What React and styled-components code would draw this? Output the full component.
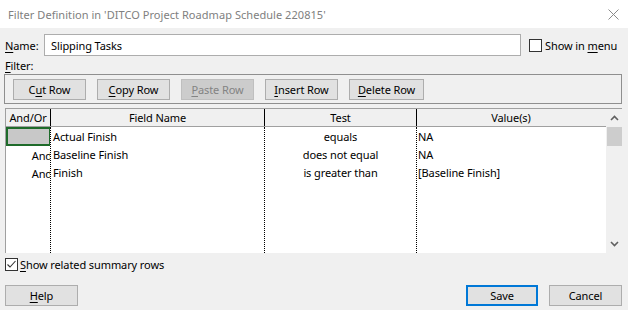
import React from "react";
import styled, { createGlobalStyle } from "styled-components";

const GlobalStyle = createGlobalStyle`
  html, body {
    margin: 0;
    padding: 0;
    background: #f0f0f0;
  }
  body {
    font-family: "Noto Sans", "Open Sans", sans-serif;
    font-size: 11px;
    color: #000;
  }
`;

const Dialog = styled.div`
  width: 628px;
  height: 310px;
  background: #f0f0f0;
  display: flex;
  flex-direction: column;
  overflow: hidden;
`;

const TitleBar = styled.div`
  height: 28px;
  background: #fff;
  display: flex;
  align-items: center;
  justify-content: space-between;
  padding: 0 9px 0 8px;
  color: #808080;
  font-size: 11px;
  letter-spacing: 0.05px;
`;

const Body = styled.div`
  display: flex;
  flex-direction: column;
  padding: 0 6px 0 5px;
`;

const NameRow = styled.div`
  display: flex;
  align-items: center;
  height: 22px;
  margin-top: 6px;
`;

const Label = styled.span`
  width: ${(p) => p.width || "auto"};
  letter-spacing: -0.1px;
  white-space: nowrap;
  u {
    text-decoration: underline;
    text-underline-offset: 2px;
  }
`;

const NameInput = styled.div`
  width: 469px;
  height: 20px;
  border: 1px solid #adadad;
  background: #fff;
  display: flex;
  align-items: center;
  padding-left: 6px;
  letter-spacing: -0.1px;
`;

const Check = styled.span`
  width: 11px;
  height: 11px;
  border: 1px solid #333;
  background: ${(p) => p.bg || "#fff"};
  display: inline-flex;
  align-items: center;
  justify-content: center;
  margin-right: ${(p) => p.gap || "3px"};
  flex-shrink: 0;
`;

const CheckLabel = styled.label`
  display: flex;
  align-items: center;
  margin-left: ${(p) => p.ml || "0"};
`;

const FilterLabel = styled.div`
  height: 17px;
  margin-top: 1px;
  display: flex;
  align-items: center;
`;

const ButtonGroup = styled.div`
  margin-left: -1px;
  height: 28px;
  border: 1px solid #8f8f8f;
  display: flex;
  align-items: center;
  gap: 11px;
  padding-left: 8px;
`;

const Button = styled.div`
  width: ${(p) => p.width || "71px"};
  height: ${(p) => (p.primary ? "17px" : "19px")};
  border: ${(p) =>
    p.primary
      ? "2px solid #0078d7"
      : p.disabled
      ? "1px solid #bfbfbf"
      : "1px solid #adadad"};
  background: ${(p) => (p.disabled ? "#cccccc" : "#e1e1e1")};
  color: ${(p) => (p.disabled ? "#838383" : "#000")};
  display: flex;
  align-items: center;
  justify-content: center;
  flex-shrink: 0;
`;

const Table = styled.div`
  margin-top: 4px;
  height: 144px;
  border-top: 1px solid #a0a0a0;
  border-left: 1px solid #a0a0a0;
  background: #fff;
  display: flex;
`;

const Grid = styled.div`
  flex: 1;
  display: flex;
  flex-direction: column;
`;

const HeaderRow = styled.div`
  display: grid;
  grid-template-columns: 44px 214px 152px 189px;
  height: 17px;
  background: #f0f0f0;
  border-bottom: 1px solid #a0a0a0;
`;

const HeaderCell = styled.div`
  display: flex;
  align-items: center;
  justify-content: center;
  border-left: ${(p) => (p.first ? "none" : "1px solid #000")};
  letter-spacing: -0.1px;
`;

const Columns = styled.div`
  flex: 1;
  display: grid;
  grid-template-columns: 44px 214px 152px 189px;
`;

const Column = styled.div`
  display: flex;
  flex-direction: column;
  border-left: ${(p) => (p.first ? "none" : "1px dotted #000")};
  overflow: hidden;
`;

const Cell = styled.div`
  height: 18px;
  display: flex;
  align-items: center;
  justify-content: ${(p) => p.align || "flex-start"};
  padding-left: ${(p) => p.pl || "0"};
  white-space: nowrap;
  overflow: hidden;
  letter-spacing: -0.1px;
`;

const SelectedCell = styled.div`
  height: 19px;
  background: #c8c8c8;
  box-shadow: inset 0 0 0 2px #1e6b2a;
  margin-right: -1px;
  flex-shrink: 0;
`;

const Clipped = styled.span`
  margin-right: -2px;
`;

const Scrollbar = styled.div`
  width: 16px;
  background: #f0f0f0;
  display: flex;
  flex-direction: column;
  align-items: center;
`;

const Arrow = styled.div`
  height: 18px;
  width: 15px;
  display: flex;
  align-items: center;
  justify-content: center;
`;

const Thumb = styled.div`
  width: 15px;
  height: 19px;
  background: #cdcdcd;
`;

const ScrollSpace = styled.div`
  flex: 1;
`;

const SummaryRow = styled.div`
  height: 13px;
  margin-top: 5px;
  display: flex;
  align-items: center;
`;

const Footer = styled.div`
  margin-top: 14px;
  display: flex;
  align-items: center;
`;

const Spacer = styled.div`
  flex: 1;
`;

const FooterGap = styled.div`
  width: 11px;
`;

const Chevron = ({ up }) => (
  <svg width="9" height="6" viewBox="0 0 9 6">
    <path
      d={up ? "M1 5 L4.5 1.5 L8 5" : "M1 1 L4.5 4.5 L8 1"}
      fill="none"
      stroke="#606060"
      strokeWidth="1.6"
    />
  </svg>
);

const rows = [
  { andOr: null, field: "Actual Finish", test: "equals", value: "NA" },
  { andOr: "And", field: "Baseline Finish", test: "does not equal", value: "NA" },
  { andOr: "And", field: "Finish", test: "is greater than", value: "[Baseline Finish]" },
];

export default function App() {
  return (
    <>
      <GlobalStyle />
      <Dialog>
        <TitleBar>
          <span>Filter Definition in 'DITCO Project Roadmap Schedule 220815'</span>
          <svg width="11" height="11" viewBox="0 0 11 11">
            <path d="M0.5 0.5 L10.5 10.5 M10.5 0.5 L0.5 10.5" stroke="#8a8a8a" strokeWidth="1" />
          </svg>
        </TitleBar>
        <Body>
          <NameRow>
            <Label width="39px">
              <u>N</u>ame:
            </Label>
            <NameInput>Slipping Tasks</NameInput>
            <CheckLabel ml="8px">
              <Check />
              <Label>
                Show in <u>m</u>enu
              </Label>
            </CheckLabel>
          </NameRow>
          <FilterLabel>
            <Label>
              <u>F</u>ilter:
            </Label>
          </FilterLabel>
          <ButtonGroup>
            <Button>
              <Label>
                C<u>u</u>t Row
              </Label>
            </Button>
            <Button>
              <Label>
                <u>C</u>opy Row
              </Label>
            </Button>
            <Button disabled>
              <Label>
                <u>P</u>aste Row
              </Label>
            </Button>
            <Button>
              <Label>
                <u>I</u>nsert Row
              </Label>
            </Button>
            <Button width="73px">
              <Label>
                <u>D</u>elete Row
              </Label>
            </Button>
          </ButtonGroup>
          <Table>
            <Grid>
              <HeaderRow>
                <HeaderCell first>And/Or</HeaderCell>
                <HeaderCell>Field Name</HeaderCell>
                <HeaderCell>Test</HeaderCell>
                <HeaderCell>Value(s)</HeaderCell>
              </HeaderRow>
              <Columns>
                <Column first>
                  {rows.map((r, i) =>
                    r.andOr ? (
                      <Cell key={i} align="flex-end">
                        <Clipped>{r.andOr}</Clipped>
                      </Cell>
                    ) : (
                      <SelectedCell key={i} />
                    )
                  )}
                </Column>
                <Column>
                  {rows.map((r, i) => (
                    <Cell key={i} pl="2px">
                      {r.field}
                    </Cell>
                  ))}
                </Column>
                <Column>
                  {rows.map((r, i) => (
                    <Cell key={i} align="center">
                      {r.test}
                    </Cell>
                  ))}
                </Column>
                <Column>
                  {rows.map((r, i) => (
                    <Cell key={i} pl="1px">
                      {r.value}
                    </Cell>
                  ))}
                </Column>
              </Columns>
            </Grid>
            <Scrollbar>
              <Arrow>
                <Chevron up />
              </Arrow>
              <Thumb />
              <ScrollSpace />
              <Arrow>
                <Chevron />
              </Arrow>
            </Scrollbar>
          </Table>
          <SummaryRow>
            <CheckLabel>
              <Check gap="2px">
                <svg width="11" height="11" viewBox="0 0 11 11">
                  <path d="M1.5 5.5 L4 8 L9.5 2" fill="none" stroke="#333" strokeWidth="1.1" />
                </svg>
              </Check>
              <Label>
                <u>S</u>how related summary rows
              </Label>
            </CheckLabel>
          </SummaryRow>
          <Footer>
            <Button>
              <Label>
                <u>H</u>elp
              </Label>
            </Button>
            <Spacer />
            <Button primary width="68px">
              <Label>Save</Label>
            </Button>
            <FooterGap />
            <Button width="71px">
              <Label>Cancel</Label>
            </Button>
          </Footer>
        </Body>
      </Dialog>
    </>
  );
}
